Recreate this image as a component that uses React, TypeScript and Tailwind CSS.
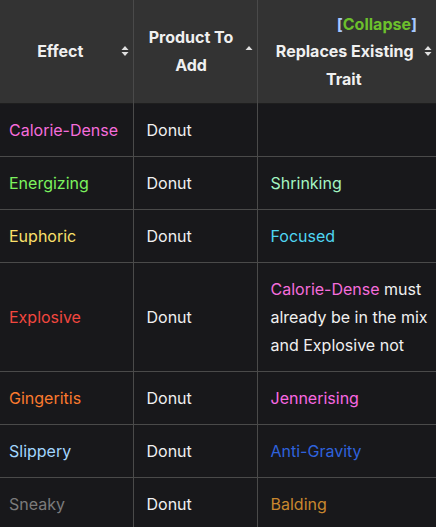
import type { ReactNode } from 'react'

type Row = {
  effect: string
  effectColor: string
  replaces: ReactNode
}

const rows: Row[] = [
  { effect: 'Calorie-Dense', effectColor: 'text-[#f56ddb]', replaces: null },
  { effect: 'Energizing', effectColor: 'text-[#7cf25e]', replaces: <span className="text-[#a4f5c2]">Shrinking</span> },
  { effect: 'Euphoric', effectColor: 'text-[#fbe06a]', replaces: <span className="text-[#4fd6f2]">Focused</span> },
  {
    effect: 'Explosive',
    effectColor: 'text-[#f2473f]',
    replaces: (
      <>
        <span className="text-[#f56ddb]">Calorie-Dense</span> must already be in the mix and Explosive not
      </>
    ),
  },
  { effect: 'Gingeritis', effectColor: 'text-[#fb7a2e]', replaces: <span className="text-[#f968e2]">Jennerising</span> },
  { effect: 'Slippery', effectColor: 'text-[#a2d6ff]', replaces: <span className="text-[#2f62dc]">Anti-Gravity</span> },
  { effect: 'Sneaky', effectColor: 'text-[#7b7b7b]', replaces: <span className="text-[#c8872e]">Balding</span> },
]

function SortIcon({ up = true, down = true }: { up?: boolean; down?: boolean }) {
  return (
    <svg width="8" height="11" viewBox="0 0 8 11" className="absolute right-[4px] top-1/2 -translate-y-1/2">
      {up && <path d="M0.5 4.5 L4 0.5 L7.5 4.5 Z" fill="#e0e0e0" />}
      {down && <path d="M0.5 6.5 L4 10.5 L7.5 6.5 Z" fill="#e0e0e0" />}
    </svg>
  )
}

export default function App() {
  return (
    <div className="w-[436px] h-[527px] overflow-hidden bg-[#18181b] font-['Inter','Noto_Sans',sans-serif] text-[16px] leading-[28px] text-[#f0f0f0]">
      <table className="w-[436px] table-fixed border-collapse">
        <colgroup>
          <col className="w-[133px]" />
          <col className="w-[124px]" />
          <col className="w-[179px]" />
        </colgroup>
        <thead>
          <tr className="bg-[#333333] h-[103px] border-b border-[#1e1e1e]">
            <th className="relative border-r border-[#4a4a4a] pl-[9px] pr-[21px] text-center font-bold">
              Effect
              <SortIcon />
            </th>
            <th className="relative border-r border-[#4a4a4a] pl-[13px] pr-[21px] text-center font-bold">
              Product To Add
              <SortIcon down={false} />
            </th>
            <th className="relative pl-[13px] pr-[19px] text-center font-bold">
              <div className="flex justify-end -mb-px">
                <span className="text-[#a9c9ff]">[</span>
                <span className="text-[#6cc02c]">Collapse</span>
                <span className="text-[#a9c9ff]">]</span>
              </div>
              <div className="-mr-[2px] whitespace-nowrap">Replaces Existing</div>
              <div>Trait</div>
              <SortIcon />
            </th>
          </tr>
        </thead>
        <tbody>
          {rows.map((r) => (
            <tr key={r.effect} className="border-t border-[#4a4a4a]">
              <td className={`border-r border-[#4a4a4a] pl-[9px] py-[12px] align-middle ${r.effectColor}`}>
                {r.effect}
              </td>
              <td className="border-r border-[#4a4a4a] pl-[13px] py-[12px] align-middle">Donut</td>
              <td className="pl-[13px] pr-[8px] py-[12px] align-middle">{r.replaces}</td>
            </tr>
          ))}
        </tbody>
      </table>
    </div>
  )
}
